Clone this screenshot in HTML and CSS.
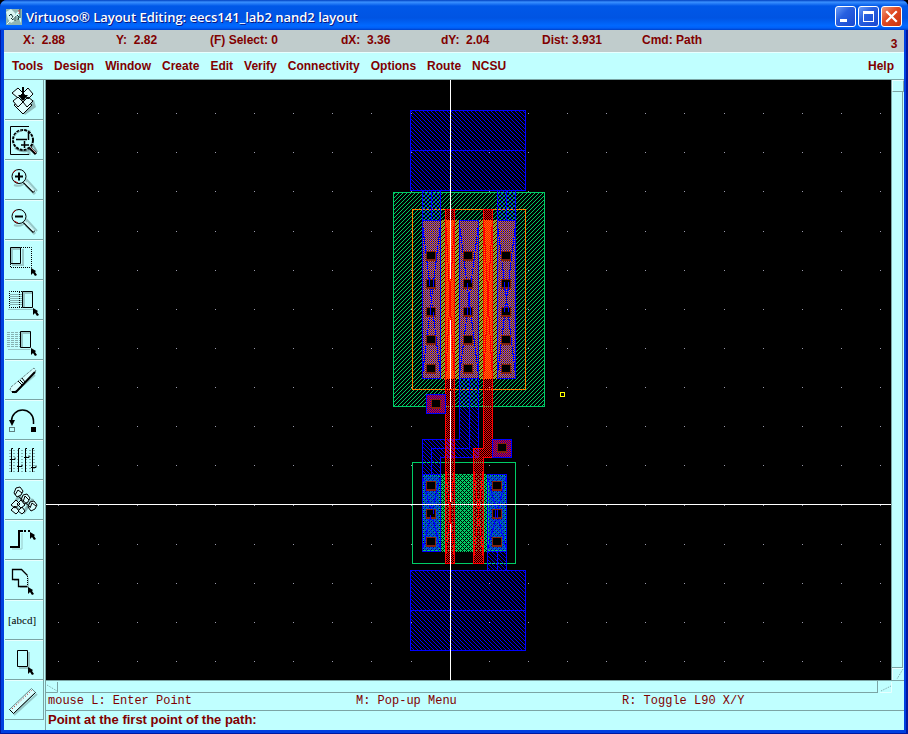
FILE: index.html
```html
<!DOCTYPE html>
<html lang="en">
<head>
<meta charset="utf-8">
<title>Virtuoso® Layout Editing</title>
<link rel="stylesheet" href="styles.css">
</head>
<body>
<div class="window">
<header class="titlebar">
  <svg class="app-icon" width="16" height="16" viewBox="0 0 16 16"><rect width="16" height="16" fill="#8fb5b2"/><path d="M0 3l5-3 4 4 1 7-5 3-3-4z" fill="#d9f5f2"/><path d="M9 5l6-5v14l-3-6z" fill="#c0ffff"/><path d="M14 0v9M3 7l2-2 2 3v3l-2-2M9 7v5M11 6l2 2-1 3" stroke="#103030" fill="none"/><path d="M13 1v4" stroke="#c33"/><path d="M1 15L13 3" stroke="#e8ffff"/></svg>
  <h1 class="title">Virtuoso® Layout Editing: eecs141_lab2 nand2 layout</h1>
  <button class="caption" aria-label="Minimize"><svg width="19" height="19"><path d="M4 12h7v3H4z" fill="#fff"/></svg></button>
  <button class="caption" aria-label="Maximize"><svg width="19" height="19"><path fill-rule="evenodd" d="M4 4h11v11H4zM5 7v7h9V7z" fill="#fff"/></svg></button>
  <button class="caption close" aria-label="Close"><svg width="19" height="19"><path d="M5 5l9 9M14 5l-9 9" stroke="#fff" stroke-width="2.2" stroke-linecap="square"/></svg></button>
</header>
<div class="status">
  <span>X:&nbsp; 2.88</span><span>Y:&nbsp; 2.82</span><span>(F) Select: 0</span><span>dX:&nbsp; 3.36</span><span>dY:&nbsp; 2.04</span><span>Dist: 3.931</span><span>Cmd: Path</span><span class="count">3</span>
</div>
<nav class="menu">
  <button>Tools</button><button>Design</button><button>Window</button><button>Create</button><button>Edit</button><button>Verify</button><button>Connectivity</button><button>Options</button><button>Route</button><button>NCSU</button><button class="help">Help</button>
</nav>
<svg class="defs" aria-hidden="true"><defs>
  <path id="cursor" d="M0 0l5 3-1 1 2 3-2 1-2-3-2 2z" fill="#000"/>
  <g id="lens"><path d="M9 24q8 3 13-5l10 11" fill="none" stroke="#98c8c8" stroke-width="2"/><path d="M21 24l9 9" stroke="#98c8c8" stroke-width="3"/><path d="M19 21l10 10" stroke="#000" stroke-width="3"/><path d="M19 20l10 10" stroke="#d8ffff" stroke-width="2"/><circle cx="14" cy="15.500" r="7" fill="#c0ffff" stroke="#000"/><path d="M8 12a7 7 0 0 1 3-3M9 20l4 2" stroke="#a00000" fill="none"/></g>
</defs></svg>
<main class="work">
<div class="tools">
  <button aria-label="Save"><svg viewBox="0 0 38 38"><path d="M12 24l8 10 11-8-2-7z" fill="#90bcbc"/><g fill="#e0ffff" stroke="#000"><path d="M9 24l9-6 9 6-9 9z"/><path d="M7 12l6-5 5 5-5 5zM18 12l5-5 5 6-5 5zM8 20l5-4 5 5-5 5zM18 21l5-5 5 4-6 6z"/></g><path d="M18 6v13" stroke="#000" stroke-width="2"/><path d="M13 14h10l-5 6z" fill="#000"/></svg></button>
  <button aria-label="Fit"><svg viewBox="0 0 38 38"><path d="M24 9v25" stroke="#98c8c8" stroke-width="3"/><path d="M24 5.500H5.500v28H24" fill="none" stroke="#000"/><path d="M10 27q12 8 18-3l4 7" stroke="#80aaaa" stroke-width="2" fill="none"/><circle cx="18" cy="19" r="10" fill="#c0ffff" stroke="#000" stroke-width="2" stroke-dasharray="3 1"/><path d="M11 18.500h11M23.500 11v8M16 24h8M19.500 20v7" stroke="#000" stroke-width="1.500"/><path d="M10 14q3-4 7-4" stroke="#799" fill="none"/><path d="M25 27l6 6" stroke="#000" stroke-width="3"/><path d="M25 26l6 6" stroke="#c99"/></svg></button>
  <button aria-label="Zoom in"><svg viewBox="0 0 38 38"><use href="#lens"/><path d="M10 15.500h8M14 11.500v8" stroke="#000" stroke-width="2"/></svg></button>
  <button aria-label="Zoom out"><svg viewBox="0 0 38 38"><use href="#lens"/><path d="M10 15.500h8" stroke="#000" stroke-width="2"/></svg></button>
  <button aria-label="Stretch"><svg viewBox="0 0 38 38"><path d="M7 24h11V8M7 22V8h8" fill="none" stroke="#98c8c8" stroke-width="2"/><path d="M5.500 6.500h10v16h-10z" fill="none" stroke="#000"/><path d="M16 6.500h10.500v20h-21v-4" fill="none" stroke="#000" stroke-dasharray="1 1"/><use href="#cursor" x="26" y="27"/></svg></button>
  <button aria-label="Copy"><svg viewBox="0 0 38 38"><path d="M5 13.500h12M5 15.500h12M5 17.500h12M5 19.500h12M5 21.500h12M5 23.500h12" stroke="#86b2b2"/><path d="M3 28.500h25" stroke="#98c8c8"/><path d="M17 10.500H4.500v16H17M14.500 11v15" fill="none" stroke="#000" stroke-dasharray="1 1"/><path d="M19 26V12h8" fill="none" stroke="#98c8c8" stroke-width="2"/><path d="M17.500 10.500h10v16h-10z" fill="none" stroke="#000"/><use href="#cursor" x="28" y="27"/></svg></button>
  <button aria-label="Move"><svg viewBox="0 0 38 38"><path d="M2 11.500h13M2 13.500h13M2 15.500h13M2 17.500h13M2 19.500h13M2 21.500h13M2 23.500h13M2 25.500h13" stroke="#86b2b2" stroke-dasharray="3 1"/><path d="M3 28.500h22" stroke="#98c8c8"/><path d="M17 26V12h8" fill="none" stroke="#98c8c8" stroke-width="2"/><path d="M15.500 10.500h10v16h-10z" fill="none" stroke="#000"/><use href="#cursor" x="26" y="27"/></svg></button>
  <button aria-label="Delete"><svg viewBox="0 0 38 38"><path d="M9 32L30 14" stroke="#98c8c8" stroke-width="2"/><path d="M6 26L29 7l2 3-20 20-4 1-2-2z" fill="#d8ffff" stroke="#688" stroke-dasharray="3 1"/><path d="M7 31h4L30 11" fill="none" stroke="#000" stroke-width="2"/><path d="M13 20l4 4M15 19l4 4M17 17l3 4" stroke="#000"/></svg></button>
  <button aria-label="Undo"><svg viewBox="0 0 38 38"><path d="M28.500 23v-3a11 11 0 0 0-22 0" fill="none" stroke="#000" stroke-width="1.500"/><path d="M4 19h6l-3 6zM26 26h5v5h-5z" fill="#000"/><path d="M4.500 26.500h5v4h-5z" fill="none" stroke="#000" stroke-dasharray="1 1"/></svg></button>
  <button aria-label="Properties"><svg viewBox="0 0 38 38"><path d="M4 9.500h28M4 12.500h28M4 15.500h28M4 18.500h28M4 21.500h28M4 24.500h28M4 27.500h28M4 30.500h28" stroke="#86b2b2" stroke-dasharray="2 2"/><path d="M8 7.500H6.500V31M15 7.500h-1.500V31M22 7.500h-1.500V31M29 7.500h-1.500V31M5 18.500h5v-2M12 25.500h5v-2M19 16.500h5v-2M26 26.500h5v-2" fill="none" stroke="#000"/></svg></button>
  <button aria-label="Instance"><svg viewBox="0 0 38 38"><path d="M11 13l16 14M17 10L8 25M9 26l10 5 9-13" stroke="#86b2b2" stroke-width="3" fill="none"/><g fill="#d8ffff" stroke="#000"><path d="M9 12l2-5 4-1 3 4-2 4-4 2zM16 19l2-5 4-1 3 4-2 4-4 2zM23 26l2-5 4-1 3 4-2 4-4 2z"/><path d="M6 24l5-5 4 4-5 4zM12 23l4-4 4 5-4 3zM6 29l4-4 4 5-3 3zM13 30l4-4 3 4-3 3z"/></g><path d="M10 14l3-5 4 3M18 21l2-6 4 4M25 27l2-5 4 3M13 15l12 11" stroke="#000" fill="none"/></svg></button>
  <button aria-label="Path"><svg viewBox="0 0 38 38"><path d="M7 28h10V12" fill="none" stroke="#98c8c8"/><path d="M5 26h9V10h4" fill="none" stroke="#000" stroke-width="2"/><path d="M19 10h7" stroke="#000" stroke-width="2" stroke-dasharray="2 2"/><use href="#cursor" x="25" y="11"/></svg></button>
  <button aria-label="Polygon"><svg viewBox="0 0 38 38"><path d="M9 20v-9h8l7 6v10h-9v-7z" fill="#98c8c8"/><path d="M22.500 25.500h-9v-7h-6v-10h9l6 6" fill="#c0ffff" stroke="#000" stroke-width="1.300"/><path d="M22.500 15v10" stroke="#000" stroke-dasharray="1 1"/><use href="#cursor" x="23" y="26"/></svg></button>
  <button aria-label="Label"><span class="abcd">[abcd]</span></button>
  <button aria-label="Rectangle"><svg viewBox="0 0 38 38"><path d="M14 27h10V11" fill="none" stroke="#98c8c8" stroke-width="2"/><path d="M12.500 9.500h10v16h-10z" fill="#c0ffff" stroke="#000"/><use href="#cursor" x="23" y="26"/></svg></button>
  <button aria-label="Ruler"><svg viewBox="0 0 38 38"><path d="M9 34L32 13" stroke="#98c8c8" stroke-width="2"/><path d="M4.500 28.500l22-21 4 4-22 21z" fill="#d8ffff" stroke="#688"/><path d="M4.500 28.500l4 4 22-21" fill="none" stroke="#000"/><path d="M7 28L27 9" stroke="#a00000" stroke-dasharray="1 2"/></svg></button>
</div>
<div class="panel">
<div class="view">
<svg class="canvas" viewBox="46 80 845 600" preserveAspectRatio="xMidYMid slice" shape-rendering="crispEdges" role="img" aria-label="nand2 layout">
<defs>
  <pattern id="metal" width="4" height="4" patternUnits="userSpaceOnUse"><path d="M0 0h1v1H0zM1 1h1v1H1zM2 2h1v1H2zM3 3h1v1H3z" fill="#00f"/></pattern>
  <pattern id="well" width="4" height="4" patternUnits="userSpaceOnUse"><path d="M3 0h1v1H3zM2 1h1v1H2zM1 2h1v1H1zM0 3h1v1H0z" fill="#00cc66"/></pattern>
  <pattern id="poly" width="2" height="2" patternUnits="userSpaceOnUse"><path d="M1 0h1v1H1zM0 1h1v1H0z" fill="#f00"/></pattern>
  <pattern id="pdiff" width="2" height="2" patternUnits="userSpaceOnUse"><path d="M0 0h1v1H0zM1 1h1v1H1z" fill="#ff8000"/></pattern>
  <pattern id="pdiff-metal" width="2" height="2" patternUnits="userSpaceOnUse"><path d="M0 0h2v2H0z" fill="#000080"/><path d="M1 0h1v1H1zM0 1h1v1H0z" fill="#ff8000"/><path d="M0 0h1v1H0z" fill="#0000ff"/></pattern>
  <pattern id="poly-metal" width="2" height="2" patternUnits="userSpaceOnUse"><path d="M0 0h2v2H0z" fill="#0000b0"/><path d="M1 0h1v1H1zM0 1h1v1H0z" fill="#f00"/></pattern>
  <pattern id="ndiff" width="4" height="4" patternUnits="userSpaceOnUse"><path d="M1 0h3v1H1zM0 1h1v1H0zM2 1h1v1H2zM0 2h2v1H0zM3 2h1v1H3zM0 3h1v1H0zM2 3h1v1H2z" fill="#00cc66"/></pattern>
  <path id="dots" d="M58 0h1M98 0h1M137 0h1M176 0h1M215 0h1M254 0h1M293 0h1M332 0h1M371 0h1M411 0h1M450 0h1M489 0h1M528 0h1M567 0h1M606 0h1M645 0h1M684 0h1M724 0h1M763 0h1M802 0h1M841 0h1M880 0h1" stroke="#9999aa"/>
  <g id="cut"><path d="M0 0h10v10H0z" fill="#802010"/><path d="M1 1h8v7H1z" fill="#000"/></g>
</defs>
<rect x="46" y="80" width="845" height="600" fill="#000"/>
<g transform="translate(0 .5)"><use href="#dots" y="113"/><use href="#dots" y="152"/><use href="#dots" y="191"/><use href="#dots" y="231"/><use href="#dots" y="270"/><use href="#dots" y="309"/><use href="#dots" y="348"/><use href="#dots" y="387"/><use href="#dots" y="426"/><use href="#dots" y="465"/><use href="#dots" y="505"/><use href="#dots" y="544"/><use href="#dots" y="583"/><use href="#dots" y="622"/><use href="#dots" y="661"/></g>
<rect x="393.500" y="192.500" width="151" height="214" fill="url(#well)" stroke="#00cc66"/>
<path d="M412.500 462.500h103v101h-103z" fill="none" stroke="#00cc66"/>
<path d="M412.500 209.500h113v180h-113z" fill="none" stroke="#ff8000"/>
<path d="M422 220h94v159h-94z" fill="url(#pdiff)"/>
<path d="M422 474h85v78h-85z" fill="url(#ndiff)"/>
<g fill="url(#metal)" stroke="#00f">
  <path d="M410.500 110.500h115v80h-115zM410.500 150.500h115"/>
  <path d="M410.500 570.500h115v80h-115zM410.500 610.500h115"/>
  <path d="M422.500 191v187h18V191M422.500 220.500h18M431.500 191v29M497.500 191v187h18V191M497.500 220.500h18M506.500 191v29M422.500 378.500h18M497.500 378.500h18"/>
  <path d="M459.500 220.500h19v237h-38v94h-18v-112h37z"/>
  <path d="M487.500 474.500h19v96h-19z"/>
</g>
<path d="M469.500 379v69h-38v26M497.500 552v18M422 474.500h19M422 551.500h19M487 551.500h20M459 378.500h20" fill="none" stroke="#00f"/>
<path d="M424 476h15v74h-15zM489 476h16v74h-16z" fill="#00f" fill-opacity=".45"/>
<path d="M423 221h17v157h-17zM460 221h18v157h-18zM498 221h17v157h-17z" fill="url(#pdiff-metal)"/>
<g stroke="#00f"><path d="M422 220l19 159M441 220l-19 159M459 220l20 159M479 220l-20 159M497 220l19 159M516 220l-19 159M422 474l19 78M441 474l-19 78M487 474l20 78M507 474l-20 78"/></g>
<path d="M445.500 209.500h9v354h-9zM483.500 209.500h9v248h-9v106h-10v-115h10z" fill="url(#poly)" stroke="#f00"/>
<path d="M46 504.500h845" stroke="#fff"/>
<path d="M445 209l10 180M455 209l-10 180M483 209l10 180M493 209l-10 180M445 462l10 102M455 462l-10 102M473 462l11 102M484 462l-11 102" stroke="#f00"/>
<path d="M450.500 80v199M450.500 320v69M450.500 391v111M450.500 524v156" stroke="#fff"/>
<path d="M426.500 394.500h19v19h-19zM492.500 439.500h19v18h-19z" fill="url(#poly-metal)" stroke="#00f"/>
<g><use href="#cut" x="431" y="399"/><use href="#cut" x="497" y="443"/>
<use href="#cut" x="426" y="251"/><use href="#cut" x="463" y="251"/><use href="#cut" x="501" y="251"/>
<use href="#cut" x="426" y="279"/><use href="#cut" x="463" y="279"/><use href="#cut" x="501" y="279"/>
<use href="#cut" x="426" y="307"/><use href="#cut" x="463" y="307"/><use href="#cut" x="501" y="307"/>
<use href="#cut" x="426" y="335"/><use href="#cut" x="463" y="335"/><use href="#cut" x="501" y="335"/>
<use href="#cut" x="426" y="364"/><use href="#cut" x="463" y="364"/><use href="#cut" x="501" y="364"/>
<use href="#cut" x="426" y="481"/><use href="#cut" x="492" y="481"/><use href="#cut" x="426" y="509"/><use href="#cut" x="492" y="509"/><use href="#cut" x="426" y="537"/><use href="#cut" x="492" y="537"/></g>
<path d="M429.500 278v8M433.500 278v9M467.500 283v7M471.500 278v5M504.500 282v9M508.500 282v9M430.500 307v8M433.500 312v8M467.500 307v8M470.500 307v8M504.500 306v6M508.500 306v6M430.500 515v5M433.500 509v5M495.500 510v8M497.500 510v8" stroke="#00f"/>
<rect x="560.500" y="392.500" width="4" height="4" fill="none" stroke="#ff0"/>
</svg>
<div class="vscroll"><i class="arrow-up"></i><i class="thumb"></i><svg width="12" height="12"><path d="M11 1L5 11" stroke="#7ba4a4" stroke-dasharray="1 1"/><path d="M0 .5h11M.5 0v12" stroke="#e8ffff"/></svg></div>
</div>
<div class="hscroll"><svg width="12" height="12"><path d="M1 4l10 6" stroke="#7ba4a4" stroke-dasharray="1 1"/><path d="M11.500 1v10.500H0" stroke="#7ba4a4" fill="none"/></svg><i class="thumb"></i><svg width="12" height="12"><path d="M1 10l10-5" stroke="#7ba4a4" stroke-dasharray="1 1"/><path d="M11.500 1v10.500H0" stroke="#e8ffff" fill="none"/></svg></div>
<div class="mouse"><span>mouse L: Enter Point</span><span>M: Pop-up Menu</span><span>R: Toggle L90 X/Y</span></div>
<div class="prompt">Point at the first point of the path:</div>
</div>
</main>
</div>
</body>
</html>
```
FILE: styles.css
```css
* { box-sizing: border-box; }
body { margin: 0; background: #000; color: #800000; font: bold 12px/16px "Liberation Sans", Arial, sans-serif; }
button { font: inherit; color: inherit; border: 0; padding: 0; margin: 0; background: none; }
svg { display: block; }
.defs { position: absolute; width: 0; height: 0; }
.window { min-height: 100vh; display: flex; flex-direction: column; padding: 0 4px 4px; background: #0040e0; border-radius: 7px 7px 0 0; box-shadow: inset 1px -1px 0 #0018a0, inset -2px -1px 0 #0018a0; }
.titlebar { display: flex; align-items: center; height: 30px; gap: 2px; margin: 0 -4px; padding: 3px 6px 0; border-radius: 7px 7px 0 0; color: #fff; background: linear-gradient(#0040c0 0, #3a90ff 7%, #0058e8 20%, #0054e3 60%, #0068ff 85%, #0060f8 93%, #0040c8); }
.title { flex: 1; margin: 0; padding-left: 2px; font: 600 13px/18px "Open Sans", sans-serif; text-shadow: 1px 1px 0 #0a1883; white-space: nowrap; }
.caption { width: 21px; height: 21px; border: 1px solid #fff; border-radius: 3px; background: linear-gradient(135deg, #6a9cf8, #2860e0 40%, #1848d0); }
.close { background: linear-gradient(135deg, #f09878, #e04820 45%, #c83410); }
.status { display: grid; grid-template-columns: 93fr 94fr 131fr 100fr 101fr 100fr 242fr 20px; height: 22px; padding-left: 19px; line-height: 20px; background: #c0cccc; white-space: nowrap; }
.count { padding-top: 4px; text-align: center; }
.menu { display: flex; align-items: center; gap: 11px; height: 28px; padding: 0 10px 0 8px; background: #c0ffff; border-top: 1px solid #e8ffff; border-bottom: 1px solid #7ba4a4; }
.help { margin-left: auto; }
.work { flex: 1; display: flex; background: #c0ffff; }
.tools { width: 42px; border-right: 1px solid #7ba4a4; padding-left: 1px; display: flex; flex-direction: column; }
.tools button { width: 39px; height: 40px; border-right: 1px solid #7ba4a4; border-bottom: 1px solid #7ba4a4; }
.tools svg { width: 38px; height: 38px; }
.tools button + button { box-shadow: inset 0 1px 0 #e8ffff; }
.abcd { display: block; padding-right: 4px; font: 11px/36px "Liberation Serif", serif; color: #000; }
.panel { flex: 1; min-width: 0; display: flex; flex-direction: column; }
.view { flex: 1; display: flex; min-height: 600px; }
.canvas { flex: 1; min-width: 0; }
.vscroll { width: 13px; display: flex; flex-direction: column; border-left: 1px solid #7ba4a4; }
.arrow-up { height: 12px; border: 1px solid #7ba4a4; border-color: #e8ffff #7ba4a4 #7ba4a4 #e8ffff; }
.vscroll .thumb { flex: 1; margin-right: 1px; border-right: 1px solid #7ba4a4; border-bottom: 1px solid #7ba4a4; }
.hscroll { display: flex; height: 13px; padding-right: 12px; gap: 2px; border-top: 1px solid #7ba4a4; }
.hscroll .thumb { flex: 1; border-right: 1px solid #7ba4a4; border-bottom: 1px solid #7ba4a4; }
.mouse { display: grid; grid-template-columns: 308fr 266fr 282fr; height: 18px; padding-left: 2px; border-bottom: 1px solid #7ba4a4; font: 12px/16px "Liberation Mono", monospace; }
.prompt { height: 19px; padding-left: 2px; font-size: 13px; line-height: 18px; }
```
